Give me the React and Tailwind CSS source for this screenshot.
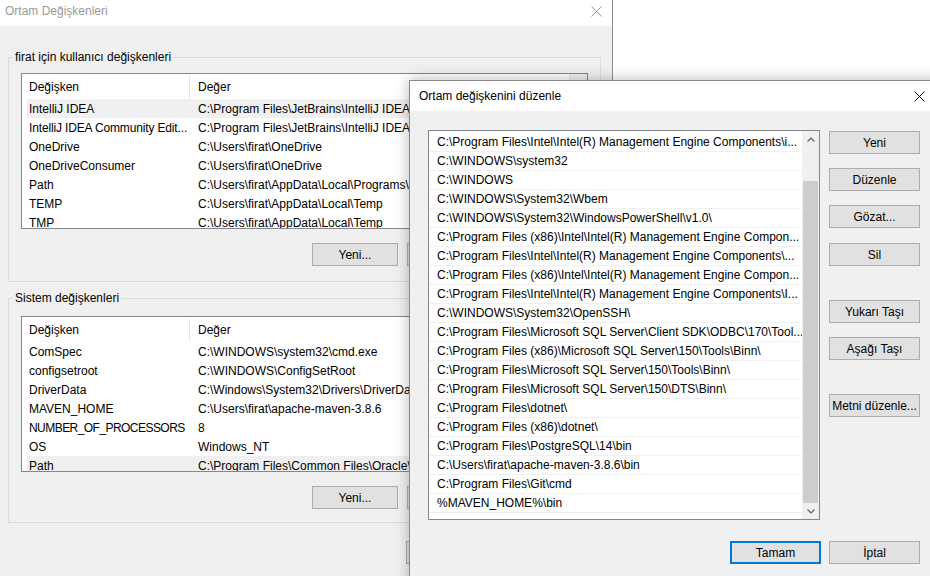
import React from 'react';

const userVars = [
  ['IntelliJ IDEA', 'C:\\Program Files\\JetBrains\\IntelliJ IDEA 2022.2.3\\bin;'],
  ['IntelliJ IDEA Community Edit...', 'C:\\Program Files\\JetBrains\\IntelliJ IDEA Community Edition\\bin;'],
  ['OneDrive', 'C:\\Users\\firat\\OneDrive'],
  ['OneDriveConsumer', 'C:\\Users\\firat\\OneDrive'],
  ['Path', 'C:\\Users\\firat\\AppData\\Local\\Programs\\Microsoft VS Code\\bin;'],
  ['TEMP', 'C:\\Users\\firat\\AppData\\Local\\Temp'],
  ['TMP', 'C:\\Users\\firat\\AppData\\Local\\Temp'],
];

const systemVars = [
  ['ComSpec', 'C:\\WINDOWS\\system32\\cmd.exe'],
  ['configsetroot', 'C:\\WINDOWS\\ConfigSetRoot'],
  ['DriverData', 'C:\\Windows\\System32\\Drivers\\DriverData'],
  ['MAVEN_HOME', 'C:\\Users\\firat\\apache-maven-3.8.6'],
  ['NUMBER_OF_PROCESSORS', '8'],
  ['OS', 'Windows_NT'],
  ['Path', 'C:\\Program Files\\Common Files\\Oracle\\Java\\javapath;'],
];

// entries shown in the edit dialog, truncated the way the list draws them
const pathEntries = [
  'C:\\Program Files\\Intel\\Intel(R) Management Engine Components\\i...',
  'C:\\WINDOWS\\system32',
  'C:\\WINDOWS',
  'C:\\WINDOWS\\System32\\Wbem',
  'C:\\WINDOWS\\System32\\WindowsPowerShell\\v1.0\\',
  'C:\\Program Files (x86)\\Intel\\Intel(R) Management Engine Compon...',
  'C:\\Program Files\\Intel\\Intel(R) Management Engine Components\\...',
  'C:\\Program Files (x86)\\Intel\\Intel(R) Management Engine Compon...',
  'C:\\Program Files\\Intel\\Intel(R) Management Engine Components\\I...',
  'C:\\WINDOWS\\System32\\OpenSSH\\',
  'C:\\Program Files\\Microsoft SQL Server\\Client SDK\\ODBC\\170\\Tool...',
  'C:\\Program Files (x86)\\Microsoft SQL Server\\150\\Tools\\Binn\\',
  'C:\\Program Files\\Microsoft SQL Server\\150\\Tools\\Binn\\',
  'C:\\Program Files\\Microsoft SQL Server\\150\\DTS\\Binn\\',
  'C:\\Program Files\\dotnet\\',
  'C:\\Program Files (x86)\\dotnet\\',
  'C:\\Program Files\\PostgreSQL\\14\\bin',
  'C:\\Users\\firat\\apache-maven-3.8.6\\bin',
  'C:\\Program Files\\Git\\cmd',
  '%MAVEN_HOME%\\bin',
];

function CloseX({ color }) {
  return (
    <svg width="11" height="11" viewBox="0 0 11 11">
      <path d="M0.5 0.5 L10.5 10.5 M10.5 0.5 L0.5 10.5" stroke={color} strokeWidth="1" fill="none" />
    </svg>
  );
}

function Chevron({ up }) {
  return (
    <svg width="8" height="5" viewBox="0 0 8 5">
      <polyline
        points={up ? '0.5,4.5 4,1 7.5,4.5' : '0.5,0.5 4,4 7.5,0.5'}
        stroke="#606060"
        strokeWidth="1.2"
        fill="none"
      />
    </svg>
  );
}

function Btn({ children, className = '' }) {
  return (
    <div className={`flex h-[23px] items-center justify-center border border-[#adadad] bg-[#e1e1e1] ${className}`}>
      {children}
    </div>
  );
}

// Arial caps run wider than Segoe UI, so long names get a little tighter spacing
function nameFit(name) {
  if (name.length > 18 && name === name.toUpperCase()) return 'tracking-[-0.55px]';
  if (name.length > 24) return 'tracking-[-0.15px]';
  return '';
}

function VarList({ rows, selected }) {
  return (
    <div className="flex h-[156px] border border-[#828790] bg-white">
      <div className="min-w-0 flex-1 overflow-hidden">
        <div className="ml-[5px] flex h-[25px] items-center">
          <div className="flex h-[22px] w-[163px] shrink-0 items-center border-r border-[#e5e5e5] pl-[2px]">Değişken</div>
          <div className="pl-[8px]">Değer</div>
        </div>
        {rows.map(([name, value], i) => (
          <div key={i} className={`ml-[5px] flex h-[19px] items-center whitespace-nowrap ${i === selected ? 'bg-[#f0f0f0]' : ''}`}>
            <div className={`w-[163px] shrink-0 overflow-hidden pl-[2px] ${nameFit(name)}`}>{name}</div>
            <div className="pl-[8px]">{value}</div>
          </div>
        ))}
      </div>
      <div className="w-[18px] shrink-0 border-l border-[#e5e5e5] bg-[#f0f0f0]" />
    </div>
  );
}

function GroupBox({ title, rows, selected, className = '' }) {
  return (
    <fieldset className={`w-[593px] border border-[#dcdcdc] px-[12px] ${className}`}>
      <legend className="ml-[-8px] px-[2px] leading-[16px]">{title}</legend>
      <VarList rows={rows} selected={selected} />
      <div className="mt-[14px] flex justify-end gap-[9px]">
        <Btn className="w-[86px]">Yeni...</Btn>
        {/* these two sit under the edit dialog */}
        <Btn className="w-[86px]" />
        <Btn className="w-[86px]" />
      </div>
    </fieldset>
  );
}

export default function App() {
  return (
    <div className="relative h-[576px] w-[930px] overflow-hidden bg-white font-['Liberation_Sans',Arial,sans-serif] text-[12px] text-black">
      {/* background window: Ortam Değişkenleri (inactive) */}
      <div className="absolute left-0 top-0 flex h-[600px] w-[613px] flex-col border-r border-[#8a8a8a] bg-[#f0f0f0]">
        <div className="flex h-[26px] shrink-0 items-center justify-between bg-white pb-[4px] pl-[5px] pr-[10px] text-[#999999]">
          <span>Ortam Değişkenleri</span>
          <CloseX color="#999999" />
        </div>
        <div className="flex flex-col pl-[8px] pt-[23px]">
          <GroupBox title="firat için kullanıcı değişkenleri" rows={userVars} selected={0} className="pt-[8px] pb-[15px]" />
          <GroupBox title="Sistem değişkenleri" rows={systemVars} selected={6} className="mt-[8px] pt-[10px] pb-[13px]" />
          <div className="mt-[18px] flex w-[593px] justify-end gap-[10px] pr-[13px]">
            <Btn className="w-[86px]" />
            <Btn className="w-[86px]" />
          </div>
        </div>
      </div>

      {/* foreground window: Ortam değişkenini düzenle */}
      <div className="absolute left-[409px] top-[80px] flex h-[520px] w-[535px] flex-col border border-[#888888] bg-[#f0f0f0] shadow-[0_0_14px_rgba(0,0,0,0.28)]">
        <div className="flex h-[30px] shrink-0 items-center justify-between bg-white pl-[9px] pr-[18px]">
          <span>Ortam değişkenini düzenle</span>
          <CloseX color="#000000" />
        </div>
        <div className="flex w-[510px] flex-col pl-[18px] pt-[19px]">
          <div className="flex gap-[9px]">
            <div className="flex h-[390px] w-[392px] border border-[#828790] bg-white">
              <div className="min-w-0 flex-1 pt-[2px]">
                {pathEntries.map((p, i) => (
                  <div key={i} className="flex h-[19px] items-center overflow-hidden whitespace-nowrap border-b border-[#f0f0f0] pl-[8px]">
                    {p}
                  </div>
                ))}
              </div>
              <div className="flex w-[17px] shrink-0 flex-col bg-[#f0f0f0]">
                <div className="flex h-[17px] items-center justify-center">
                  <Chevron up />
                </div>
                <div className="flex flex-1 flex-col pt-[33px]">
                  <div className="ml-[1px] w-[15px] flex-1 bg-[#cdcdcd]" />
                </div>
                <div className="flex h-[16px] items-center justify-center">
                  <Chevron />
                </div>
              </div>
            </div>
            <div className="flex flex-col pt-[1px]">
              <Btn className="w-[91px]">Yeni</Btn>
              <Btn className="mt-[14px] w-[91px]">Düzenle</Btn>
              <Btn className="mt-[14px] w-[91px]">Gözat...</Btn>
              <Btn className="mt-[15px] w-[91px]">Sil</Btn>
              <Btn className="mt-[34px] w-[91px]">Yukarı Taşı</Btn>
              <Btn className="mt-[14px] w-[91px]">Aşağı Taşı</Btn>
              <Btn className="mt-[34px] w-[91px]">Metni düzenle...</Btn>
            </div>
          </div>
          <div className="mt-[21px] flex justify-end gap-[8px]">
            <div className="flex h-[23px] w-[91px] items-center justify-center border-2 border-[#0078d7] bg-[#e1e1e1]">Tamam</div>
            <Btn className="w-[91px]">İptal</Btn>
          </div>
        </div>
      </div>
    </div>
  );
}
